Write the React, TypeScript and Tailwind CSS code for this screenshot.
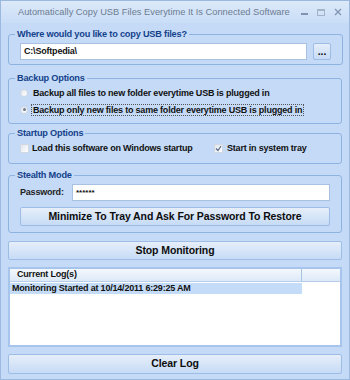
import React from 'react';

const font = "font-['Liberation_Sans',Arial,sans-serif]";

const Group = ({ title, className, children }: { title: string; className?: string; children: React.ReactNode }) => (
  <fieldset className={`border border-[#8fb3e0] rounded-[3px] px-[11px] ${className ?? ''}`}>
    <legend className="ml-[-5px] px-[2px] text-[9.2px] font-bold text-[#15428b] leading-[12px]">{title}</legend>
    {children}
  </fieldset>
);

const Button = ({ label, className }: { label: string; className?: string }) => (
  <div
    className={`flex items-center justify-center border border-[#9ebde6] rounded-[2px] bg-gradient-to-b from-[#e6eefa] via-[#d6e5f8] to-[#c6dbf5] text-[10.5px] font-bold text-[#0d0d0d] tracking-[-0.1px] ${className ?? ''}`}
  >
    {label}
  </div>
);

const Radio = ({ checked }: { checked?: boolean }) => (
  <span className="w-[8px] h-[8px] rounded-full border border-[#d0d8e2] bg-gradient-to-br from-[#e3e8ee] to-[#ffffff] flex items-center justify-center shrink-0">
    {checked && <span className="w-[3px] h-[3px] rounded-full bg-[#6f7d8c]" />}
  </span>
);

const Check = ({ checked }: { checked?: boolean }) => (
  <span className="w-[9px] h-[9px] border border-[#d0d8e2] bg-gradient-to-br from-[#e0e6ed] to-[#ffffff] flex items-center justify-center shrink-0">
    {checked && (
      <svg width="7" height="7" viewBox="0 0 7 7">
        <path d="M1 3.5 L3 5.5 L6 1" stroke="#5a6a86" strokeWidth="1.2" fill="none" />
      </svg>
    )}
  </span>
);

export default function App() {
  return (
    <div className={`w-[350px] h-[380px] bg-[#c4daf7] border border-[#9bb9df] flex flex-col overflow-hidden ${font}`}>
      {/* title bar */}
      <div className="h-[22px] shrink-0 flex items-center bg-gradient-to-b from-[#dce9f9] to-[#c9ddf7] text-[#6c7c91] text-[9.3px] relative">
        <span className="ml-[17px] mt-[2px] whitespace-nowrap">Automatically Copy USB Files Everytime It Is Connected Software</span>
        <div className="absolute right-[7px] top-[7px] flex items-center gap-[9px]">
          <span className="w-[7px] h-[2px] bg-[#7f93b0] mt-[4px]" />
          <span className="w-[8px] h-[7px] border border-[#a3b3c8] border-t-2" />
          <svg width="8" height="8" viewBox="0 0 8 8">
            <path d="M1 1 L7 7 M7 1 L1 7" stroke="#8397b4" strokeWidth="1.4" />
          </svg>
        </div>
      </div>

      <div className="px-[7px] flex flex-col text-[9px] font-bold text-[#111] tracking-[-0.2px] whitespace-nowrap">
        <Group title="Where would you like to copy USB files?" className="mt-[5px] h-[37px]">
          <div className="flex items-center gap-[6px] mt-[3px]">
            <div className="w-[287px] h-[17px] bg-white border border-[#a9c1e1] flex items-center px-[3px]">C:\Softpedia\</div>
            <Button label="..." className="w-[18px] h-[17px] text-[9px]" />
          </div>
        </Group>

        <Group title="Backup Options" className="mt-[7px] h-[52px]">
          <div className="flex flex-col gap-[6px] mt-[3px]">
            <div className="flex items-center gap-[3px] h-[11px]">
              <Radio />
              <span className="leading-[10px] px-[1px] border border-transparent">Backup all files to new folder everytime USB is plugged in</span>
            </div>
            <div className="flex items-center gap-[3px] h-[11px]">
              <Radio checked />
              <span className="leading-[10px] px-[1px] border border-dotted border-[#555]">
                Backup only new files to same folder everytime USB is plugged in
              </span>
            </div>
          </div>
        </Group>

        <Group title="Startup Options" className="mt-[3px] h-[37px]">
          <div className="flex items-center mt-[4px] h-[11px]">
            <div className="flex items-center gap-[3px] w-[194px]">
              <Check />
              <span>Load this software on Windows startup</span>
            </div>
            <div className="flex items-center gap-[4px]">
              <Check checked />
              <span>Start in system tray</span>
            </div>
          </div>
        </Group>

        <Group title="Stealth Mode" className="mt-[5px] h-[64px]">
          <div className="flex items-center mt-[3px]">
            <span className="w-[52px] text-[#222]">Password:</span>
            <div className="w-[258px] h-[17px] bg-white border border-[#a9c1e1] flex items-center px-[3px] text-[8px] leading-[8px] tracking-normal">
              ******
            </div>
          </div>
          <Button label="Minimize To Tray And Ask For Password To Restore" className="h-[19px] mt-[6px] w-[310px]" />
        </Group>

        <Button label="Stop Monitoring" className="h-[19px] mt-[8px]" />

        <div className="mt-[7px] h-[80px] bg-white border-2 border-[#a7c5ec] flex flex-col">
          <div className="h-[13px] flex bg-gradient-to-b from-[#f4f8fd] to-[#dde9f8] border-b border-[#b7cde9]">
            <div className="w-[292px] border-r border-[#a9c3e4] pl-[7px] flex items-center">Current Log(s)</div>
          </div>
          <div className="w-[292px] h-[11px] bg-[#c5dcf8] flex items-center pl-[2px] mt-[1px]">
            Monitoring Started at 10/14/2011 6:29:25 AM
          </div>
        </div>

        <Button label="Clear Log" className="h-[20px] mt-[7px]" />
      </div>
    </div>
  );
}
